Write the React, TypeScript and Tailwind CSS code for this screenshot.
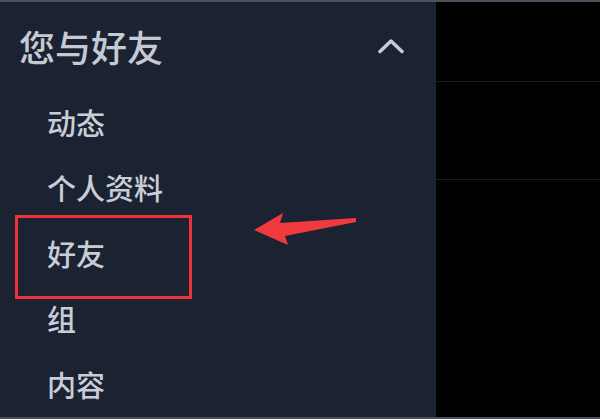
import { ReactNode } from 'react'

const items = ['动态', '个人资料', '好友', '组', '内容']

function NavItem({ children }: { children: ReactNode }) {
  return (
    <div className="h-[66px] flex items-center pl-[47px] text-[29px] leading-none font-medium text-[#c9ced6]">
      {children}
    </div>
  )
}

export default function App() {
  return (
    <div
      className="relative w-[600px] h-[419px] overflow-hidden bg-black border-t-2 border-b-2 border-[#4b525d] flex"
      style={{ fontFamily: '"Noto Sans CJK SC", "Noto Sans", sans-serif' }}
    >
      <aside className="w-[436px] h-full bg-[#1b2333] flex flex-col">
        <div className="h-[88px] flex items-center justify-between pl-[19px] pr-[32px]">
          <span className="text-[36px] leading-none font-medium text-[#c6cbd3]">您与好友</span>
          <svg width="26" height="16" viewBox="0 0 26 16" fill="none">
            <polyline
              points="2,13.5 13,3 24,13.5"
              stroke="#c6cbd3"
              strokeWidth="3.5"
              strokeLinecap="round"
              strokeLinejoin="round"
            />
          </svg>
        </div>
        {items.map(label => (
          <NavItem key={label}>{label}</NavItem>
        ))}
      </aside>

      <div className="flex-1 h-full flex flex-col">
        <div className="h-[80px] border-b border-[#1c1c1c]" />
        <div className="h-[98px] border-b border-[#1c1c1c]" />
      </div>

      {/* annotation: highlight box */}
      <div className="absolute left-[15px] top-[213px] w-[177px] h-[84px] border-[3px] border-[#ec3438]" />

      {/* annotation: arrow */}
      <svg className="absolute left-[250px] top-[203px]" width="110" height="45" viewBox="0 0 110 45">
        <polygon points="4,25 33,8 30,18 106,13 106,17 35,31 38,40" fill="#f03a3e" />
      </svg>
    </div>
  )
}
